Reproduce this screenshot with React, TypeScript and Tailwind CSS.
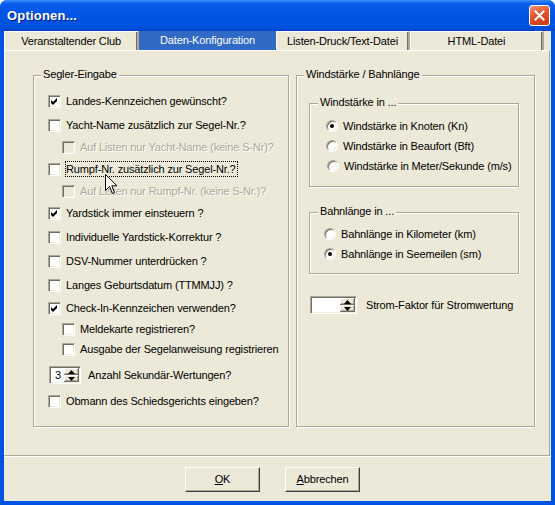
import React from "react";

const font = "font-['Liberation_Sans',Arial,sans-serif]";

function Check({ checked, disabled }: { checked?: boolean; disabled?: boolean }) {
  return (
    <span
      className={
        "relative block w-[13px] h-[13px] shrink-0 border border-t-[#aca899] border-l-[#aca899] border-b-white border-r-white shadow-[inset_1px_1px_0_#716f64,inset_-1px_-1px_0_#f1efe2] " +
        (disabled ? "bg-[#ece9d8]" : "bg-white")
      }
    >
      {checked && (
        <svg className="absolute left-0 top-0" width="11" height="11" viewBox="0 0 11 11">
          <path d="M2 4 L4 6 L8 2 L8 5 L4 9 L2 7 Z" fill="#000" />
        </svg>
      )}
    </span>
  );
}

function Radio({ checked }: { checked?: boolean }) {
  return (
    <span className="relative block w-[12px] h-[12px] shrink-0 rounded-full bg-white border border-t-[#aca899] border-l-[#aca899] border-b-white border-r-white shadow-[inset_1px_1px_0_#716f64,inset_-1px_-1px_0_#f1efe2]">
      {checked && <span className="absolute left-[3px] top-[3px] w-[4px] h-[4px] rounded-full bg-black" />}
    </span>
  );
}

function SpinButton({ up }: { up?: boolean }) {
  return (
    <span className="flex flex-1 items-center justify-center bg-[#ece9d8] shadow-[inset_-1px_-1px_0_#716f64,inset_1px_1px_0_#fff,inset_-2px_-2px_0_#aca899]">
      <svg width="7" height="4" viewBox="0 0 7 4">
        {up ? <path d="M0 4 L3.5 0 L7 4 Z" fill="#000" /> : <path d="M0 0 L7 0 L3.5 4 Z" fill="#000" />}
      </svg>
    </span>
  );
}

function Spin({ value, width }: { value: string; width: string }) {
  return (
    <div
      className={
        "flex h-[18px] shrink-0 bg-white p-[1px] border border-t-[#aca899] border-l-[#aca899] border-b-white border-r-white shadow-[inset_1px_1px_0_#716f64,inset_-1px_-1px_0_#f1efe2] " +
        width
      }
    >
      <span className="flex-1 pl-[4px] text-[11px] leading-[14px]">{value}</span>
      <span className="flex w-[15px] flex-col">
        <SpinButton up />
        <SpinButton />
      </span>
    </div>
  );
}

function Legend({ children, left }: { children: React.ReactNode; left: string }) {
  return (
    <span className={"absolute top-[-8px] bg-[#ece9d8] px-[2px] leading-[13px] " + left}>{children}</span>
  );
}

const etched =
  "relative border border-[#aca899] shadow-[inset_1px_1px_0_#fff,1px_1px_0_#fff]";

type Row = {
  label: string;
  h: string;
  checked?: boolean;
  sub?: boolean;
  disabled?: boolean;
  focus?: boolean;
  spin?: string;
};

const seglerRows: Row[] = [
  { label: "Landes-Kennzeichen gewünscht?", h: "h-[24px]", checked: true },
  { label: "Yacht-Name zusätzlich zur Segel-Nr.?", h: "h-[24px]" },
  { label: "Auf Listen nur Yacht-Name (keine S-Nr)?", h: "h-[20px]", sub: true, disabled: true },
  { label: "Rumpf-Nr. zusätzlich zur Segel-Nr.?", h: "h-[24px]", focus: true },
  { label: "Auf Listen nur Rumpf-Nr. (keine S-Nr.)?", h: "h-[20px]", sub: true, disabled: true },
  { label: "Yardstick immer einsteuern ?", h: "h-[24px]", checked: true },
  { label: "Individuelle Yardstick-Korrektur ?", h: "h-[24px]" },
  { label: "DSV-Nummer unterdrücken ?", h: "h-[24px]" },
  { label: "Langes Geburtsdatum (TTMMJJ) ?", h: "h-[24px]" },
  { label: "Check-In-Kennzeichen verwenden?", h: "h-[22px]", checked: true },
  { label: "Meldekarte registrieren?", h: "h-[20px]", sub: true },
  { label: "Ausgabe der Segelanweisung registrieren", h: "h-[20px]", sub: true },
  { label: "Anzahl Sekundär-Wertungen?", h: "h-[32px]", spin: "3" },
  { label: "Obmann des Schiedsgerichts eingeben?", h: "h-[20px]" },
];

const tabs = [
  { label: "Veranstaltender Club", w: "w-[135px]" },
  { label: "Daten-Konfiguration", w: "w-[137px]", active: true },
  { label: "Listen-Druck/Text-Datei", w: "w-[134px]" },
  { label: "HTML-Datei", w: "w-[134px]" },
];

function Cursor() {
  return (
    <svg className="absolute left-[71px] top-[98px]" width="13" height="21" viewBox="0 0 13 21">
      <path
        d="M0.5 0.5 L0.5 16.5 L4.5 12.5 L7.5 19.5 L9.5 18.5 L6.8 11.8 L12 11.8 Z"
        fill="#fff"
        stroke="#000"
        strokeWidth="1"
        strokeLinejoin="miter"
      />
    </svg>
  );
}

function XpButton({ children }: { children: React.ReactNode }) {
  return (
    <button className="flex h-[25px] w-[75px] items-center justify-center bg-[#ece9d8] text-[11px] border border-t-white border-l-white border-b-[#404040] border-r-[#404040] shadow-[inset_-1px_-1px_0_#aca899]">
      {children}
    </button>
  );
}

export default function App() {
  return (
    <div className={"w-[555px] h-[505px] flex flex-col rounded-t-[7px] bg-[#0054e3] text-black text-[11px] " + font}>
      {/* title bar */}
      <div className="flex h-[31px] shrink-0 items-center rounded-t-[7px] bg-[linear-gradient(180deg,#3d8ff8_0%,#0a5ded_12%,#0054e3_50%,#0052e0_85%,#0044cc_100%)] pl-[7px] pr-[5px]">
        <span className="flex-1 text-[13px] font-bold text-white [text-shadow:1px_1px_0_#0a1f7a] tracking-[0.2px]">
          Optionen...
        </span>
        <span className="flex h-[21px] w-[21px] items-center justify-center rounded-[3px] border border-white bg-[linear-gradient(160deg,#f0957a_0%,#e2532c_45%,#c83a14_100%)]">
          <svg width="11" height="11" viewBox="0 0 11 11">
            <path d="M1.5 1.5 L9.5 9.5 M9.5 1.5 L1.5 9.5" stroke="#fff" strokeWidth="2" strokeLinecap="square" />
          </svg>
        </span>
      </div>

      {/* body */}
      <div className="mx-[4px] mb-[4px] flex flex-1 flex-col bg-[#ece9d8] tracking-[-0.15px]">
        <div className="flex h-[19px] shrink-0">
          {tabs.map((t) => (
            <div
              key={t.label}
              className={
                "flex items-center justify-center leading-[13px] " +
                t.w +
                (t.active
                  ? " bg-[#316ac5] text-white"
                  : " border-t border-l border-t-white border-l-white border-r-2 border-r-[#aca899] shadow-[inset_-1px_0_0_#716f64]")
              }
            >
              {t.label}
            </div>
          ))}
        </div>

        {/* tab sheet */}
        <div className="mr-[1px] flex h-[406px] shrink-0 gap-[7px] border border-t-white border-l-white border-b-[#aca899] border-r-[#aca899] pl-[28px] pt-[24px]">
          {/* Segler-Eingabe */}
          <div className={etched + " w-[256px] h-[352px] pl-[14px] pt-[13px]"}>
            <Legend left="left-[7px]">Segler-Eingabe</Legend>
            {seglerRows.map((r) => (
              <div key={r.label} className={"flex items-center " + r.h + (r.sub ? " ml-[14px]" : "")}>
                {r.spin ? (
                  <>
                    <span className="ml-[1px]">
                      <Spin value={r.spin} width="w-[32px]" />
                    </span>
                    <span className="ml-[7px] leading-[13px]">{r.label}</span>
                  </>
                ) : (
                  <>
                    <Check checked={r.checked} disabled={r.disabled} />
                    {r.focus ? (
                      <span className="ml-[4px] border border-dotted border-black pr-[1px] leading-[14px]">{r.label}</span>
                    ) : (
                      <span
                        className={
                          "ml-[5px] leading-[13px] whitespace-nowrap" +
                          (r.disabled ? " text-[#aca899] [text-shadow:1px_1px_0_#fff]" : "")
                        }
                      >
                        {r.label}
                      </span>
                    )}
                  </>
                )}
              </div>
            ))}
            <Cursor />
          </div>

          {/* Windstärke / Bahnlänge */}
          <div className={etched + " w-[239px] h-[352px] pl-[12px] pt-[27px]"}>
            <Legend left="left-[7px]">Windstärke / Bahnlänge</Legend>

            <div className={etched + " w-[210px] pl-[16px] pt-[12px] pb-[10px]"}>
              <Legend left="left-[8px]">Windstärke in ...</Legend>
              {[
                { label: "Windstärke in Knoten (Kn)", checked: true },
                { label: "Windstärke in Beaufort (Bft)" },
                { label: "Windstärke in Meter/Sekunde (m/s)", nudge: true },
              ].map((o) => (
                <div key={o.label} className={"flex h-[20px] items-center" + (o.nudge ? " pl-[1px]" : "")}>
                  <Radio checked={o.checked} />
                  <span className="ml-[5px] leading-[13px] whitespace-nowrap">{o.label}</span>
                </div>
              ))}
            </div>

            <div className={etched + " mt-[25px] w-[210px] pl-[14px] pt-[11px] pb-[9px]"}>
              <Legend left="left-[8px]">Bahnlänge in ...</Legend>
              {[
                { label: "Bahnlänge in Kilometer (km)" },
                { label: "Bahnlänge in Seemeilen (sm)", checked: true },
              ].map((o) => (
                <div key={o.label} className="flex h-[20px] items-center">
                  <Radio checked={o.checked} />
                  <span className="ml-[5px] leading-[13px] whitespace-nowrap">{o.label}</span>
                </div>
              ))}
            </div>

            <div className="ml-[1px] mt-[22px] flex items-center">
              <Spin value="" width="w-[47px]" />
              <span className="ml-[9px] leading-[13px]">Strom-Faktor für Stromwertung</span>
            </div>
          </div>
        </div>

        {/* buttons */}
        <div className="flex flex-1 justify-center gap-[25px] border-t border-t-white pr-[10px] pt-[10px]">
          <XpButton>
            <span className="underline underline-offset-[1px]">O</span>K
          </XpButton>
          <XpButton>
            <span className="underline underline-offset-[1px]">A</span>bbrechen
          </XpButton>
        </div>
      </div>
    </div>
  );
}
